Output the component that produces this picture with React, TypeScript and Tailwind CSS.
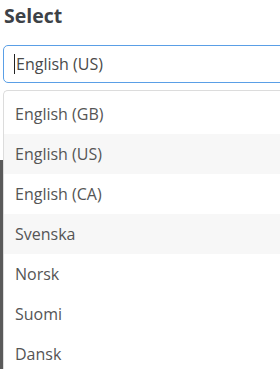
// Language select with open dropdown list

const languages = [
  "English (GB)",
  "English (US)",
  "English (CA)",
  "Svenska",
  "Norsk",
  "Suomi",
  "Dansk",
];

const shaded = new Set(["English (US)", "Svenska"]);

export default function App() {
  return (
    <div className="relative h-[369px] w-[280px] overflow-hidden bg-white font-['Open_Sans','Lato',sans-serif]">
      <div className="absolute left-0 top-[160px] h-[209px] w-[3px] bg-[#5a5a5a]" />
      <div className="relative pl-[3px]">
        <h2 className="pl-[1px] pt-[4px] text-[19.5px] font-bold leading-[24px] text-[#3d4247]">Select</h2>
        <div className="mt-[17px] flex h-[38px] w-[290px] items-center rounded-[5px] border border-[#5a9fe6] pl-[10px] text-[16px] text-[#4a4a4a]">
          <span className="mr-[1px] h-[20px] w-[1px] bg-[#222]" />
          <span>English (US)</span>
        </div>
        <ul className="mt-[7px] w-[290px] rounded-tl-[5px] border-l border-t border-[#dcdcdc] bg-white pt-[3px]">
          {languages.map((lang) => (
            <li
              key={lang}
              className={`flex h-[40px] items-center pl-[11px] text-[16px] text-[#555] ${
                shaded.has(lang) ? "bg-[#f7f7f7]" : "bg-white"
              }`}
            >
              {lang}
            </li>
          ))}
        </ul>
      </div>
    </div>
  );
}
